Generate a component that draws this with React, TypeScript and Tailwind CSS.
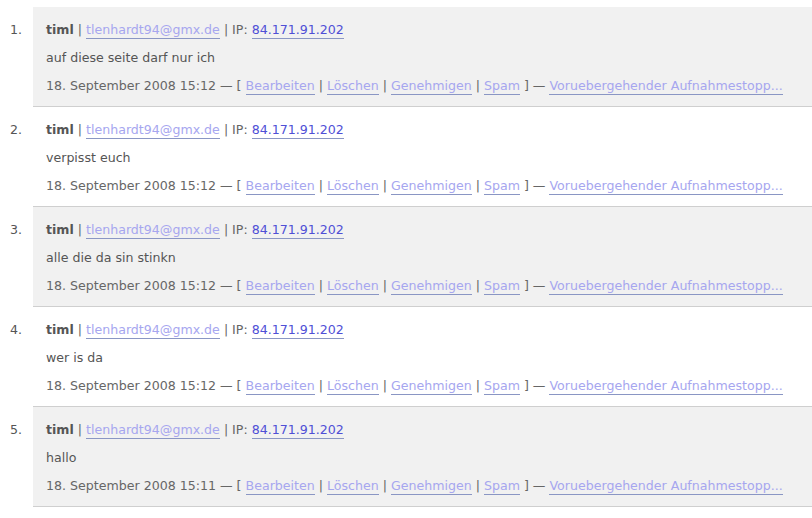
const ROWS = [
    { text: 'auf diese seite darf nur ich', time: '15:12' },
    { text: 'verpisst euch', time: '15:12' },
    { text: 'alle die da sin stinkn', time: '15:12' },
    { text: 'wer is da', time: '15:12' },
    { text: 'hallo', time: '15:11' },
]

const Link = ({ children, strong }: { children: React.ReactNode; strong?: boolean }) => (
    <a
        href="#"
        className={
            strong
                ? 'text-[#4f4fd6] border-b border-[#8a96c4] pb-[1px]'
                : 'text-[#a6a6ef] border-b border-[#8a96c4] pb-[1px]'
        }
    >
        {children}
    </a>
)

export default function App() {
    return (
        <div
            className="w-[812px] h-[518px] bg-white pt-[7px] text-[12.6px] text-[#666]"
            style={{ fontFamily: '"DejaVu Sans", "Liberation Sans", sans-serif' }}
        >
            <ol>
                {ROWS.map((row, i) => (
                    <li key={i} className="flex">
                        <div className="w-[33px] shrink-0 pl-[10px] pt-[9px] leading-[28px] text-[#555]">{i + 1}.</div>
                        <div
                            className={`flex-1 pl-[13px] pt-[9px] pb-[6px] leading-[28px] border-b border-[#cfcfcf] ${
                                i % 2 === 0 ? 'bg-[#f1f1f1]' : 'bg-white'
                            }`}
                        >
                            <div className="whitespace-nowrap">
                                <b className="text-[#555]">timl</b> | <Link>tlenhardt94@gmx.de</Link> | IP:{' '}
                                <Link strong>84.171.91.202</Link>
                            </div>
                            <div className="text-[#555]">{row.text}</div>
                            <div className="whitespace-nowrap">
                                18. September 2008 {row.time} — [ <Link>Bearbeiten</Link> | <Link>Löschen</Link> |{' '}
                                <Link>Genehmigen</Link> | <Link>Spam</Link> ] — <Link>Voruebergehender Aufnahmestopp...</Link>
                            </div>
                        </div>
                    </li>
                ))}
            </ol>
        </div>
    )
}
